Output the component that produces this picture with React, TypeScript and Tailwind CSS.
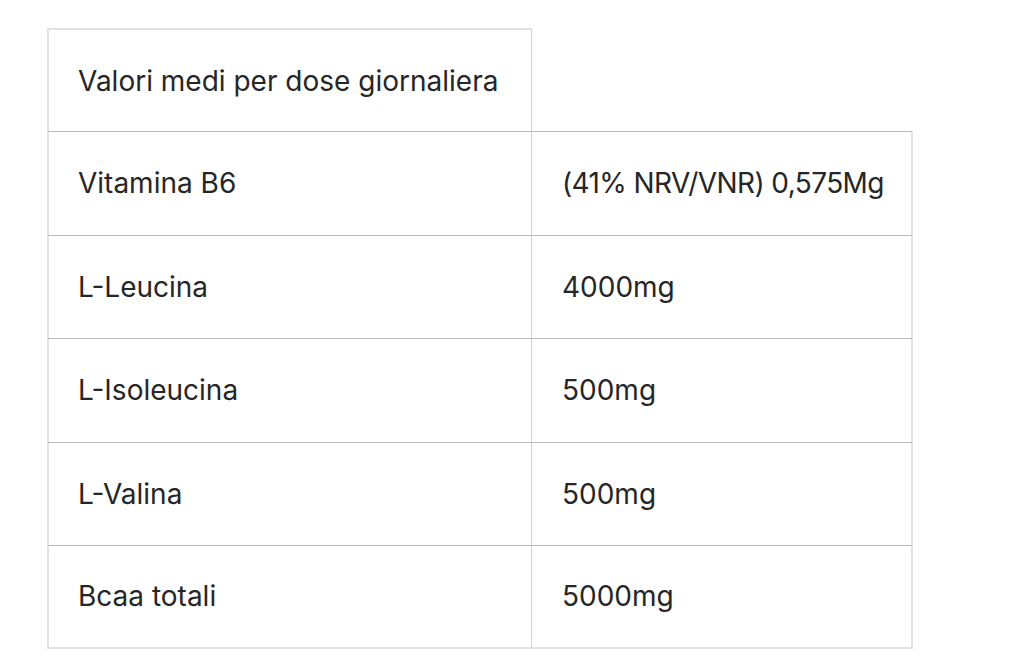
const rows: [string, string][] = [
  ["Vitamina B6", "(41% NRV/VNR) 0,575Mg"],
  ["L-Leucina", "4000mg"],
  ["L-Isoleucina", "500mg"],
  ["L-Valina", "500mg"],
  ["Bcaa totali", "5000mg"],
];

export default function App() {
  return (
    <div className="min-h-screen bg-white pt-[28px] pl-[47px] font-['Inter',sans-serif] text-[28px] text-[#262626]">
      <div className="grid w-[866px] grid-cols-[485px_381px]">
        {/* header row: only the left cell is boxed */}
        <div className="flex h-[103px] items-center border-l-2 border-t-2 border-r border-[#e2e2e2] border-r-[#cfcfcf] pl-[29px]">
          Valori medi per dose giornaliera
        </div>
        <div className="h-[103px]" />
        {rows.map(([name, value], i) => {
          const last = i === rows.length - 1;
          return (
            <div key={name} className="contents">
              <div
                className={`flex h-[103.5px] items-center border-l-2 border-l-[#e2e2e2] border-t border-t-[#b9b9b9] border-r border-r-[#cfcfcf] pl-[29px] ${
                  last ? "border-b-2 border-b-[#e2e2e2]" : ""
                }`}
              >
                {name}
              </div>
              <div
                className={`flex h-[103.5px] items-center border-t border-t-[#b9b9b9] border-r-2 border-r-[#e2e2e2] pl-[30px] ${
                  last ? "border-b-2 border-b-[#e2e2e2]" : ""
                }`}
              >
                <span className={i === 0 ? "tracking-[-0.6px]" : ""}>{value}</span>
              </div>
            </div>
          );
        })}
      </div>
    </div>
  );
}
